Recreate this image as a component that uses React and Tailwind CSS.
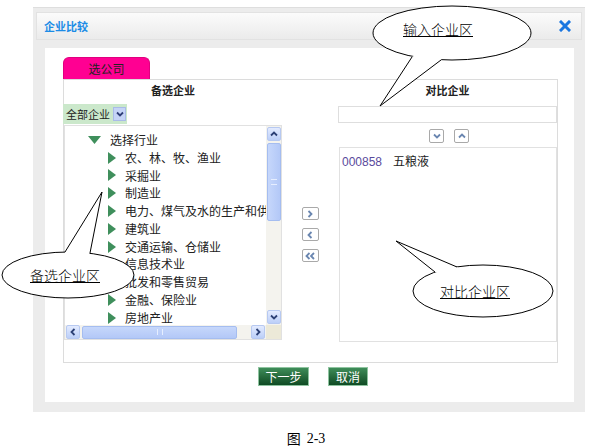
import React from 'react';

const industries = [
  '农、林、牧、渔业',
  '采掘业',
  '制造业',
  '电力、煤气及水的生产和供应业',
  '建筑业',
  '交通运输、仓储业',
  '信息技术业',
  '批发和零售贸易',
  '金融、保险业',
  '房地产业',
];

const cjk = { fontFamily: '"Noto Sans CJK SC", "Liberation Sans", sans-serif' };

const Chevron = ({ dir = 'down', color = '#4d6185' }) => {
  const paths = {
    down: 'M2 3.5 L5 6.5 L8 3.5',
    up: 'M2 6.5 L5 3.5 L8 6.5',
    left: 'M6.5 2 L3.5 5 L6.5 8',
    right: 'M3.5 2 L6.5 5 L3.5 8',
  };
  return (
    <svg width="10" height="10" viewBox="0 0 10 10" className="shrink-0">
      <path d={paths[dir]} fill="none" stroke={color} strokeWidth="1.8" />
    </svg>
  );
};

const ScrollBtn = ({ dir, className = '' }) => (
  <div className={`w-[14px] h-[14px] shrink-0 rounded-[2px] border border-[#b7c9f1] bg-gradient-to-b from-[#e3ebff] to-[#bccff8] flex items-center justify-center ${className}`}>
    <Chevron dir={dir} color="#2c4075" />
  </div>
);

const MoveBtn = ({ children }) => (
  <div className="w-[17px] h-[13px] rounded-[2px] border border-[#a9a9a9] bg-white flex items-center justify-center">
    {children}
  </div>
);

const Callout = ({ cx, cy, rx, ry, base, tip }) => {
  const [b1, b2] = base;
  // push the base a little into the ellipse so the fill hides the outline there
  const inset = (p) => [p[0] + (cx - p[0]) * 0.08, p[1] + (cy - p[1]) * 0.08];
  const i1 = inset(b1);
  const i2 = inset(b2);
  return (
    <g>
      <ellipse cx={cx} cy={cy} rx={rx} ry={ry} fill="white" stroke="black" strokeWidth="1" />
      <polygon points={`${i1[0]},${i1[1]} ${b1[0]},${b1[1]} ${tip[0]},${tip[1]} ${b2[0]},${b2[1]} ${i2[0]},${i2[1]}`} fill="white" />
      <polyline points={`${b1[0]},${b1[1]} ${tip[0]},${tip[1]} ${b2[0]},${b2[1]}`} fill="none" stroke="black" strokeWidth="1" />
    </g>
  );
};

const App = () => {
  return (
    <div className="relative w-[593px] h-[448px] bg-white overflow-hidden text-[#222]" style={cjk}>
      {/* dialog */}
      <div className="ml-[33px] pt-[7px] w-[552px]">
        <div className="w-[552px] h-[405px] bg-[#ececec] border-t border-[#dedede] pt-[4px]">
          {/* title bar */}
          <div className="ml-[3px] w-[546px] h-[28px] bg-gradient-to-b from-[#fbfbfb] to-[#ebebeb] border border-[#e2e2e2] flex items-center justify-between px-[7px]">
            <span className="text-[11px] font-bold text-[#1b8ce6]">企业比较</span>
            <svg width="12" height="12" viewBox="0 0 12 12" className="mr-[3px]">
              <path d="M2 2 L10 10 M10 2 L2 10" stroke="#1a76e0" strokeWidth="3" strokeLinecap="square" />
            </svg>
          </div>

          {/* white panel */}
          <div className="ml-[12px] mt-[8px] w-[529px] h-[354px] bg-white pl-[18px] pt-[9px]">
            <div className="w-[87px] h-[22px] bg-[#ff0092] rounded-t-[6px] border border-b-0 border-[#e0007f] flex items-center justify-center text-[12px] text-[#222]">
              选公司
            </div>
            <div className="w-[495px] h-[284px] border border-[#dcdcdc] flex">
              {/* left column */}
              <div className="w-[218px] flex flex-col">
                <div className="h-[20px] flex items-center justify-center text-[11px] font-bold">备选企业</div>
                <div className="mt-[4px] -ml-[1px] w-[64px] h-[20px] bg-[#cbe8cb] flex items-center pl-[3px]">
                  <span className="text-[11px]">全部企业</span>
                  <div className="ml-[3px] w-[13px] h-[14px] bg-[#c5d4f6] border border-[#a9bbe8] flex items-center justify-center">
                    <Chevron dir="down" color="#2f3f78" />
                  </div>
                </div>
                <div className="mt-[1px] w-[218px] h-[215px] border border-[#e1e1e1] flex flex-col">
                  <div className="flex flex-1 min-h-0">
                    <div className="flex-1 min-w-0 overflow-hidden whitespace-nowrap pt-[5px] text-[12px]">
                      <div className="h-[17.8px] flex items-center pl-[23px]">
                        <svg width="13" height="8" viewBox="0 0 13 8" className="shrink-0"><path d="M0 0 H13 L6.5 8 Z" fill="#3f8f5c" /></svg>
                        <span className="ml-[9px]">选择行业</span>
                      </div>
                      {industries.map((name) => (
                        <div key={name} className="h-[17.8px] flex items-center pl-[43px]">
                          <svg width="8" height="12" viewBox="0 0 8 12" className="shrink-0"><path d="M0 0 L8 6 L0 12 Z" fill="#3f8f5c" /></svg>
                          <span className="ml-[9px] shrink-0">{name}</span>
                        </div>
                      ))}
                    </div>
                    {/* vertical scrollbar */}
                    <div className="w-[15px] shrink-0 bg-[#f4f3ee] flex flex-col items-center">
                      <ScrollBtn dir="up" className="mt-[1px]" />
                      <div className="mt-[2px] w-[14px] h-[78px] rounded-[2px] border border-[#a5bdf0] bg-gradient-to-r from-[#c6d7fb] to-[#b3c8f7] flex items-center justify-center">
                        <div className="w-[6px] h-[6px] border-y border-[#e6eeff]" />
                      </div>
                      <div className="flex-1" />
                      <ScrollBtn dir="down" className="mb-[1px]" />
                    </div>
                  </div>
                  {/* horizontal scrollbar */}
                  <div className="h-[14px] flex bg-[#f4f3ee]">
                    <div className="flex-1 flex items-center px-[1px]">
                      <ScrollBtn dir="left" />
                      <div className="ml-[2px] w-[155px] h-[13px] rounded-[2px] border border-[#a5bdf0] bg-gradient-to-b from-[#c6d7fb] to-[#b3c8f7] flex items-center justify-center">
                        <div className="w-[6px] h-[6px] border-x border-[#e6eeff]" />
                      </div>
                      <div className="flex-1" />
                      <ScrollBtn dir="right" />
                    </div>
                    <div className="w-[15px] bg-[#ece9d8]" />
                  </div>
                </div>
              </div>

              {/* middle column */}
              <div className="w-[56px] flex flex-col items-center pt-[127px] gap-[8px]">
                <MoveBtn><Chevron dir="right" color="#6a86b0" /></MoveBtn>
                <MoveBtn><Chevron dir="left" color="#6a86b0" /></MoveBtn>
                <MoveBtn>
                  <svg width="12" height="10" viewBox="0 0 12 10">
                    <path d="M5.5 2 L2.5 5 L5.5 8 M10 2 L7 5 L10 8" fill="none" stroke="#6a86b0" strokeWidth="1.8" />
                  </svg>
                </MoveBtn>
              </div>

              {/* right column */}
              <div className="w-[219px] flex flex-col">
                <div className="h-[20px] flex items-center justify-center text-[11px] font-bold">对比企业</div>
                <div className="mt-[6px] w-[219px] h-[17px] border border-[#dedede] bg-white" />
                <div className="mt-[6px] h-[14px] flex justify-center gap-[10px] pl-[3px]">
                  <div className="w-[15px] h-[14px] rounded-[2px] border border-[#a9a9a9] bg-white flex items-center justify-center">
                    <Chevron dir="down" color="#6a86b0" />
                  </div>
                  <div className="w-[15px] h-[14px] rounded-[2px] border border-[#a9a9a9] bg-white flex items-center justify-center">
                    <Chevron dir="up" color="#6a86b0" />
                  </div>
                </div>
                <div className="mt-[4px] ml-[1px] w-[218px] h-[195px] border border-[#e1e1e1] pt-[4px] pl-[2px] text-[12px]">
                  <span className="text-[#5a4a9c]" style={{ fontFamily: '"Liberation Sans", sans-serif' }}>000858</span>
                  <span className="ml-[11px]">五粮液</span>
                </div>
              </div>
            </div>

            {/* buttons */}
            <div className="mt-[4px] flex pl-[195px] gap-[19px]">
              <div className="w-[51px] h-[19px] border border-[#8fc4a0] bg-gradient-to-b from-[#3f8d59] to-[#0f4b24] flex items-center justify-center text-[12px] text-white">
                下一步
              </div>
              <div className="w-[40px] h-[19px] border border-[#8fc4a0] bg-gradient-to-b from-[#3f8d59] to-[#0f4b24] flex items-center justify-center text-[12px] text-white">
                取消
              </div>
            </div>
          </div>
        </div>
      </div>

      {/* caption */}
      <div className="mt-[16px] flex justify-center pl-[19px] text-[14px] text-black">
        <span>图</span>
        <span className="ml-[6px]" style={{ fontFamily: '"Liberation Serif", serif' }}>2-3</span>
      </div>

      {/* annotation callouts */}
      <svg className="absolute left-0 top-0" width="593" height="448" viewBox="0 0 593 448">
        <Callout cx={452} cy={33} rx={79} ry={27} base={[[412, 57], [441, 60]]} tip={[380, 106]} />
        <Callout cx={68} cy={275} rx={66} ry={23} base={[[65, 252], [90, 253]]} tip={[102, 192]} />
        <Callout cx={483} cy={291} rx={70} ry={26} base={[[435, 272], [457, 267]]} tip={[396, 241]} />
      </svg>
      <div className="absolute left-[403px] top-[22px] text-[14px] font-light underline text-black leading-none">输入企业区</div>
      <div className="absolute left-[30px] top-[268px] text-[14px] font-light underline text-black leading-none">备选企业区</div>
      <div className="absolute left-[440px] top-[284px] text-[14px] font-light underline text-black leading-none">对比企业区</div>
    </div>
  );
};

export default App;
